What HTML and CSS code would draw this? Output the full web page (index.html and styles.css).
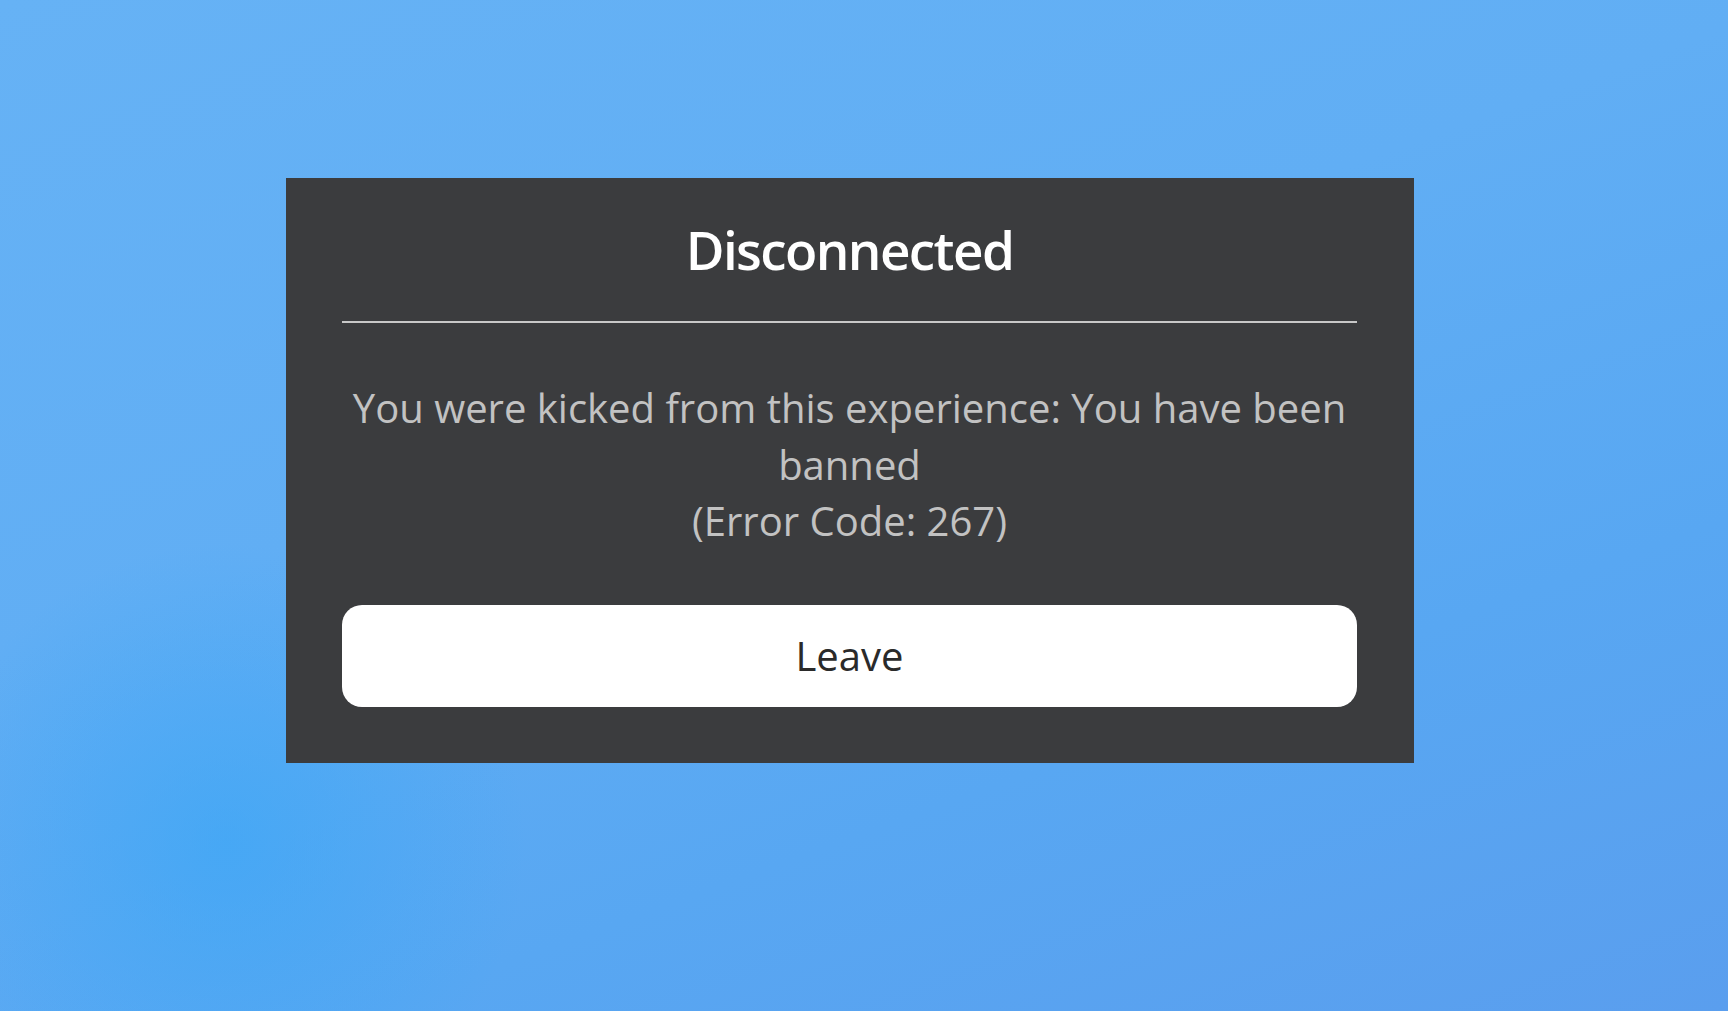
FILE: index.html
```html
<!DOCTYPE html>
<html lang="en">
<head>
<meta charset="utf-8">
<title>Disconnected</title>
<link rel="stylesheet" href="styles.css">
</head>
<body>
<main class="screen">
  <section class="dialog">
    <h1 class="title">Disconnected</h1>
    <div class="divider"></div>
    <p class="message">You were kicked from this experience: You have been banned<br>(Error Code: 267)</p>
    <button class="leave" type="button">Leave</button>
  </section>
</main>
</body>
</html>
```

FILE: styles.css
```css
html, body {
  margin: 0;
  padding: 0;
  height: 100%;
}

body {
  background:
    radial-gradient(circle at 226px 843px, rgba(56, 166, 246, 0.6) 0px, rgba(56, 166, 246, 0) 300px),
    linear-gradient(160deg, #66b2f5 0%, #61aef4 40%, #58a7f2 70%, #5a9eee 100%);
  font-family: "Open Sans", "Noto Sans", sans-serif;
  overflow: hidden;
}

.screen {
  padding: 178px 0 0 286px;
  box-sizing: border-box;
  height: 100vh;
}

.dialog {
  width: 1128px;
  height: 585px;
  box-sizing: border-box;
  background: #3b3c3e;
  padding: 40px 57px 56px 56px;
  display: flex;
  flex-direction: column;
}

.title {
  margin: 0;
  font-size: 53px;
  line-height: 64px;
  font-weight: 600;
  letter-spacing: -1.6px;
  color: #ffffff;
  text-align: center;
}

.divider {
  margin-top: 39px;
  height: 2px;
  background: #c8c8c8;
}

.message {
  margin: 57px 0 0;
  font-size: 40px;
  line-height: 56.5px;
  color: #c2c2c2;
  text-align: center;
}

.leave {
  margin-top: 55px;
  height: 102px;
  border: none;
  border-radius: 20px;
  background: #ffffff;
  color: #2a2a2a;
  font-family: "Open Sans", "Noto Sans", sans-serif;
  font-size: 40px;
  padding: 0;
}
```
